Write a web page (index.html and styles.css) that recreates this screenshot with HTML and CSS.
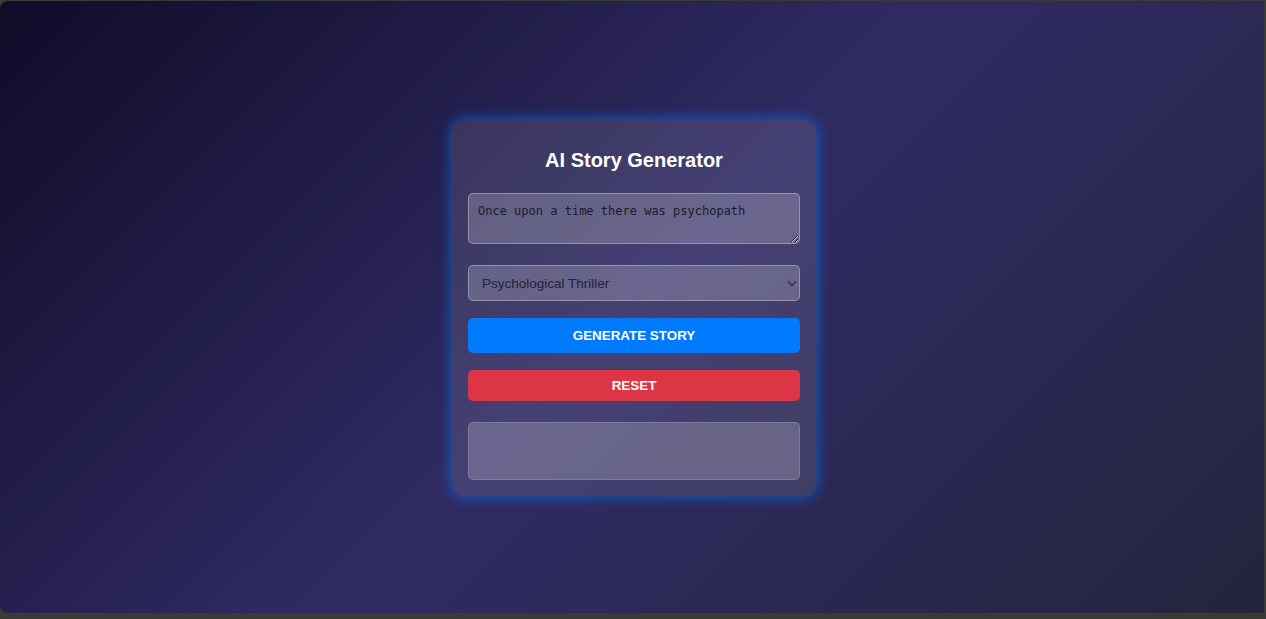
FILE: index.html
```html
<!DOCTYPE html>
<html lang="en">
<head>
<meta charset="utf-8">
<title>AI Story Generator</title>
<link rel="stylesheet" href="styles.css">
</head>
<body>
<div class="screen">
  <div class="card">
    <h2 class="title">AI Story Generator</h2>
    <textarea class="prompt">Once upon a time there was psychopath</textarea>
    <div class="select-wrap">
      <select class="genre">
        <option>Psychological Thriller</option>
      </select>
    </div>
    <button class="btn btn-generate">GENERATE STORY</button>
    <button class="btn btn-reset">RESET</button>
    <div class="output"></div>
  </div>
</div>
</body>
</html>
```
FILE: styles.css
```css
* { box-sizing: border-box; }
html, body {
  margin: 0;
  padding: 0;
  width: 1266px;
  height: 619px;
  overflow: hidden;
  background: #3a3a36;
  font-family: "Liberation Sans", Arial, sans-serif;
}
.screen {
  margin: 1px 2px 6px 0;
  padding-left: 4px;
  height: 612px;
  border-radius: 8px 0 0 8px;
  background: linear-gradient(135deg, #0f0c29 0%, #302b63 50%, #24243e 100%);
  display: flex;
  align-items: center;
  justify-content: center;
}
.card {
  width: 364px;
  padding: 16px;
  border-radius: 12px;
  background: rgba(255, 255, 255, 0.1);
  box-shadow: 0 0 14px rgba(0, 123, 255, 0.75);
  display: flex;
  flex-direction: column;
  margin-top: 2px;
}
.title {
  margin: 12px 0 21px;
  font-size: 20px;
  line-height: 24px;
  font-weight: bold;
  color: #fff;
  text-align: center;
}
.prompt {
  display: block;
  width: 100%;
  height: 51px;
  padding: 10px 9px;
  margin: 0 0 21px;
  border: 1px solid rgba(255, 255, 255, 0.3);
  border-radius: 5px;
  background: rgba(255, 255, 255, 0.2);
  color: #1b1b2b;
  font-family: "DejaVu Sans Mono", "Liberation Mono", monospace;
  font-size: 12px;
  line-height: 15px;
  resize: vertical;
  outline: none;
}
.select-wrap {
  position: relative;
  margin: 0 0 17px;
}
.genre {
  display: block;
  width: 100%;
  height: 36px;
  padding: 0 13px;
  border: 1px solid rgba(255, 255, 255, 0.3);
  border-radius: 5px;
  background: rgba(255, 255, 255, 0.2);
  color: #25223a;
  font-family: "Liberation Sans", Arial, sans-serif;
  font-size: 13.5px;
  appearance: none;
  -webkit-appearance: none;
}
.select-wrap::after {
  content: "";
  position: absolute;
  right: 5px;
  top: 14px;
  width: 5px;
  height: 5px;
  border-right: 1.8px solid #1e1e28;
  border-bottom: 1.8px solid #1e1e28;
  transform: rotate(45deg);
  pointer-events: none;
}
.btn {
  display: block;
  width: 100%;
  border: none;
  border-radius: 5px;
  color: #fff;
  font-family: "Liberation Sans", Arial, sans-serif;
  font-size: 13.4px;
  font-weight: bold;
  padding: 0;
}
.btn-generate {
  height: 35px;
  background: #007bff;
  margin: 0 0 17px;
}
.btn-reset {
  height: 31px;
  background: #dc3545;
  margin: 0 0 21px;
}
.output {
  height: 58px;
  border: 1px solid rgba(255, 255, 255, 0.15);
  border-radius: 5px;
  background: rgba(255, 255, 255, 0.2);
}
```
